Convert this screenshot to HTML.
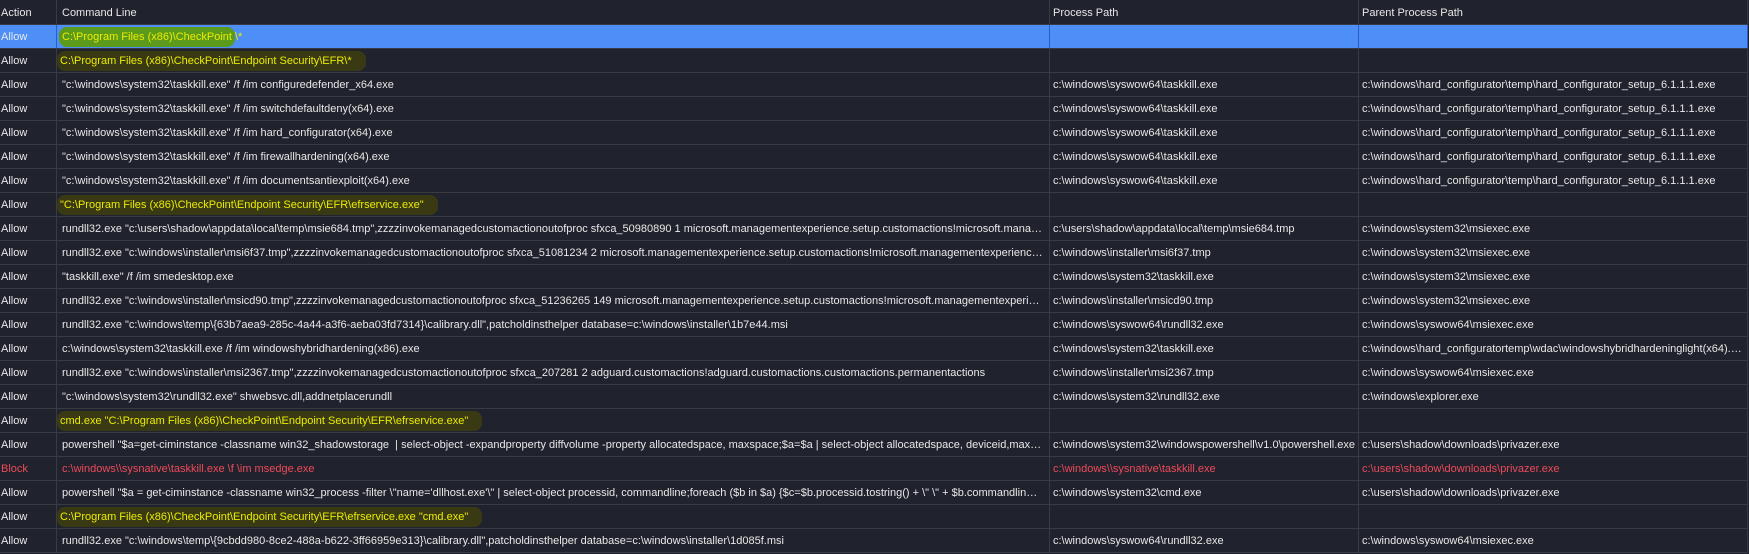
<!DOCTYPE html>
<html><head><meta charset="utf-8"><style>
html,body{margin:0;padding:0;background:#20222d;width:1749px;height:554px;overflow:hidden}
body{font-family:"Liberation Sans",Arial,sans-serif;font-size:11px;color:#e8e8e8;position:relative}
.r{position:absolute;left:0;width:1748px;height:24px;border-bottom:1px solid #3a3b42;box-sizing:border-box}
.c{position:absolute;top:0;height:23px;line-height:25px;white-space:nowrap;overflow:hidden;text-overflow:ellipsis;box-sizing:border-box;border-right:1px solid #3a3b42}
.a{left:0;width:57px;padding-left:1px}
.b{left:57px;width:993px;padding-left:5px;padding-right:6px}
.p{left:1050px;width:309px;padding-left:3px}
.q{left:1359px;width:389px;padding-left:3px}
.sel{background:#4d8ff7}
.sel .c{border-right-color:#2a5fc0}
.red{color:#ee4a5a}
.hl{color:#ecec00;background:#393a14;padding:4px 14px 4px 3px;margin-left:-5px;border-radius:8px}
.hl1{color:#ecec00;background:#5b9a1a;padding:4px 3px;margin-left:-3px;border-radius:8px}
</style></head><body>
<div class="r" style="top:0;height:25px"><div class="c a" style="height:24px;line-height:26px">Action</div><div class="c b" style="height:24px;line-height:26px">Command Line</div><div class="c p" style="height:24px;line-height:26px">Process Path</div><div class="c q" style="height:24px;line-height:26px">Parent Process Path</div></div>
<div class="r sel" style="top:25px"><div class="c a">Allow</div><div class="c b"><span class="hl1">C:\Program Files (x86)\CheckPoint</span><span style="color:#ecec00">\*</span></div><div class="c p"></div><div class="c q"></div></div>
<div class="r" style="top:49px"><div class="c a">Allow</div><div class="c b"><span class="hl">C:\Program Files (x86)\CheckPoint\Endpoint Security\EFR\*</span></div><div class="c p"></div><div class="c q"></div></div>
<div class="r" style="top:73px"><div class="c a">Allow</div><div class="c b">"c:\windows\system32\taskkill.exe" /f /im configuredefender_x64.exe</div><div class="c p">c:\windows\syswow64\taskkill.exe</div><div class="c q">c:\windows\hard_configurator\temp\hard_configurator_setup_6.1.1.1.exe</div></div>
<div class="r" style="top:97px"><div class="c a">Allow</div><div class="c b">"c:\windows\system32\taskkill.exe" /f /im switchdefaultdeny(x64).exe</div><div class="c p">c:\windows\syswow64\taskkill.exe</div><div class="c q">c:\windows\hard_configurator\temp\hard_configurator_setup_6.1.1.1.exe</div></div>
<div class="r" style="top:121px"><div class="c a">Allow</div><div class="c b">"c:\windows\system32\taskkill.exe" /f /im hard_configurator(x64).exe</div><div class="c p">c:\windows\syswow64\taskkill.exe</div><div class="c q">c:\windows\hard_configurator\temp\hard_configurator_setup_6.1.1.1.exe</div></div>
<div class="r" style="top:145px"><div class="c a">Allow</div><div class="c b">"c:\windows\system32\taskkill.exe" /f /im firewallhardening(x64).exe</div><div class="c p">c:\windows\syswow64\taskkill.exe</div><div class="c q">c:\windows\hard_configurator\temp\hard_configurator_setup_6.1.1.1.exe</div></div>
<div class="r" style="top:169px"><div class="c a">Allow</div><div class="c b">"c:\windows\system32\taskkill.exe" /f /im documentsantiexploit(x64).exe</div><div class="c p">c:\windows\syswow64\taskkill.exe</div><div class="c q">c:\windows\hard_configurator\temp\hard_configurator_setup_6.1.1.1.exe</div></div>
<div class="r" style="top:193px"><div class="c a">Allow</div><div class="c b"><span class="hl">"C:\Program Files (x86)\CheckPoint\Endpoint Security\EFR\efrservice.exe"</span></div><div class="c p"></div><div class="c q"></div></div>
<div class="r" style="top:217px"><div class="c a">Allow</div><div class="c b">rundll32.exe "c:\users\shadow\appdata\local\temp\msie684.tmp",zzzzinvokemanagedcustomactionoutofproc sfxca_50980890 1 microsoft.managementexperience.setup.customactions!microsoft.managementexperience</div><div class="c p">c:\users\shadow\appdata\local\temp\msie684.tmp</div><div class="c q">c:\windows\system32\msiexec.exe</div></div>
<div class="r" style="top:241px"><div class="c a">Allow</div><div class="c b">rundll32.exe "c:\windows\installer\msi6f37.tmp",zzzzinvokemanagedcustomactionoutofproc sfxca_51081234 2 microsoft.managementexperience.setup.customactions!microsoft.managementexperience.setup.x</div><div class="c p">c:\windows\installer\msi6f37.tmp</div><div class="c q">c:\windows\system32\msiexec.exe</div></div>
<div class="r" style="top:265px"><div class="c a">Allow</div><div class="c b">"taskkill.exe" /f /im smedesktop.exe</div><div class="c p">c:\windows\system32\taskkill.exe</div><div class="c q">c:\windows\system32\msiexec.exe</div></div>
<div class="r" style="top:289px"><div class="c a">Allow</div><div class="c b">rundll32.exe "c:\windows\installer\msicd90.tmp",zzzzinvokemanagedcustomactionoutofproc sfxca_51236265 149 microsoft.managementexperience.setup.customactions!microsoft.managementexperience.setup</div><div class="c p">c:\windows\installer\msicd90.tmp</div><div class="c q">c:\windows\system32\msiexec.exe</div></div>
<div class="r" style="top:313px"><div class="c a">Allow</div><div class="c b">rundll32.exe "c:\windows\temp\{63b7aea9-285c-4a44-a3f6-aeba03fd7314}\calibrary.dll",patcholdinsthelper database=c:\windows\installer\1b7e44.msi</div><div class="c p">c:\windows\syswow64\rundll32.exe</div><div class="c q">c:\windows\syswow64\msiexec.exe</div></div>
<div class="r" style="top:337px"><div class="c a">Allow</div><div class="c b">c:\windows\system32\taskkill.exe /f /im windowshybridhardening(x86).exe</div><div class="c p">c:\windows\system32\taskkill.exe</div><div class="c q">c:\windows\hard_configuratortemp\wdac\windowshybridhardeninglight(x64).exe</div></div>
<div class="r" style="top:361px"><div class="c a">Allow</div><div class="c b">rundll32.exe "c:\windows\installer\msi2367.tmp",zzzzinvokemanagedcustomactionoutofproc sfxca_207281 2 adguard.customactions!adguard.customactions.customactions.permanentactions</div><div class="c p">c:\windows\installer\msi2367.tmp</div><div class="c q">c:\windows\syswow64\msiexec.exe</div></div>
<div class="r" style="top:385px"><div class="c a">Allow</div><div class="c b">"c:\windows\system32\rundll32.exe" shwebsvc.dll,addnetplacerundll</div><div class="c p">c:\windows\system32\rundll32.exe</div><div class="c q">c:\windows\explorer.exe</div></div>
<div class="r" style="top:409px"><div class="c a">Allow</div><div class="c b"><span class="hl">cmd.exe "C:\Program Files (x86)\CheckPoint\Endpoint Security\EFR\efrservice.exe"</span></div><div class="c p"></div><div class="c q"></div></div>
<div class="r" style="top:433px"><div class="c a">Allow</div><div class="c b">powershell "$a=get-ciminstance -classname win32_shadowstorage &nbsp;| select-object -expandproperty diffvolume -property allocatedspace, maxspace;$a=$a | select-object allocatedspace, deviceid,maxspace;foreach</div><div class="c p">c:\windows\system32\windowspowershell\v1.0\powershell.exe</div><div class="c q">c:\users\shadow\downloads\privazer.exe</div></div>
<div class="r red" style="top:457px"><div class="c a">Block</div><div class="c b">c:\windows\\sysnative\taskkill.exe \f \im msedge.exe</div><div class="c p">c:\windows\\sysnative\taskkill.exe</div><div class="c q">c:\users\shadow\downloads\privazer.exe</div></div>
<div class="r" style="top:481px"><div class="c a">Allow</div><div class="c b">powershell "$a = get-ciminstance -classname win32_process -filter \"name='dllhost.exe'\" | select-object processid, commandline;foreach ($b in $a) {$c=$b.processid.tostring() + \" \" + $b.commandline; add-content</div><div class="c p">c:\windows\system32\cmd.exe</div><div class="c q">c:\users\shadow\downloads\privazer.exe</div></div>
<div class="r" style="top:505px"><div class="c a">Allow</div><div class="c b"><span class="hl">C:\Program Files (x86)\CheckPoint\Endpoint Security\EFR\efrservice.exe "cmd.exe"</span></div><div class="c p"></div><div class="c q"></div></div>
<div class="r" style="top:529px"><div class="c a">Allow</div><div class="c b">rundll32.exe "c:\windows\temp\{9cbdd980-8ce2-488a-b622-3ff66959e313}\calibrary.dll",patcholdinsthelper database=c:\windows\installer\1d085f.msi</div><div class="c p">c:\windows\syswow64\rundll32.exe</div><div class="c q">c:\windows\syswow64\msiexec.exe</div></div>
</body></html>
